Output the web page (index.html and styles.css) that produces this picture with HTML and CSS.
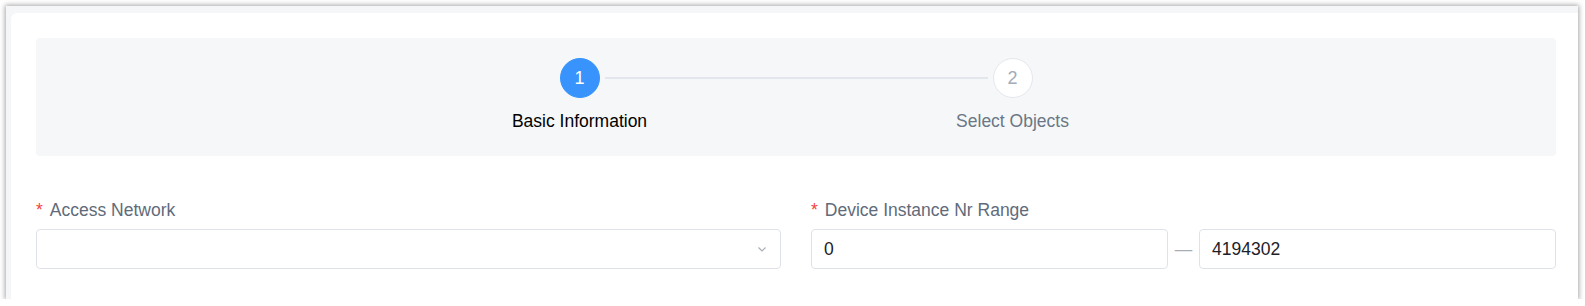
FILE: index.html
```html
<!DOCTYPE html>
<html lang="en">
<head>
  <meta charset="UTF-8">
  <meta name="viewport" content="width=device-width, initial-scale=1.0">
  <title>New Device Scan</title>
  <link rel="stylesheet" href="styles.css">
</head>
<body>
  <div class="frame">
    <div class="card">

      <!-- Steps -->
      <div class="steps">
        <div class="step active">
          <div class="step-head">
            <span class="step-icon">1</span>
            <span class="step-line"></span>
          </div>
          <div class="step-title">Basic Information</div>
        </div>
        <div class="step">
          <div class="step-head">
            <span class="step-icon">2</span>
          </div>
          <div class="step-title">Select Objects</div>
        </div>
      </div>

      <!-- Form -->
      <div class="form-row">
        <div class="form-item">
          <label class="form-label"><span class="req">*</span>Access Network</label>
          <div class="select">
            <span class="select-value"></span>
            <svg class="chevron" width="12" height="12" viewBox="0 0 12 12">
              <path d="M2.5 4.5 L6 8 L9.5 4.5" fill="none" stroke="#a8adb6" stroke-width="1.2"/>
            </svg>
          </div>
        </div>
        <div class="form-item">
          <label class="form-label"><span class="req">*</span>Device Instance Nr Range</label>
          <div class="range">
            <input class="input" type="text" value="0">
            <span class="range-sep">—</span>
            <input class="input" type="text" value="4194302">
          </div>
        </div>
      </div>

    </div>
  </div>
</body>
</html>
```

FILE: styles.css
```css
body {
  margin: 0;
  background: #fff;
  font-family: "Liberation Sans", Arial, sans-serif;
}

.frame {
  margin: 6px 0 0 6px;
  width: 1572px;
  height: 293px;
  padding: 7px 0 0 5px;
  box-sizing: border-box;
  background: #f5f6f8;
  box-shadow: 0 0 5px 1px rgba(0, 0, 0, 0.35);
  overflow: hidden;
}

.card {
  height: 100%;
  background: #fff;
  border-top-left-radius: 6px;
  padding: 25px 22px 0 25px;
  box-sizing: border-box;
}

/* Steps */
.steps {
  height: 118px;
  background: #f6f7f9;
  border-radius: 4px;
  display: flex;
  justify-content: center;
  padding-top: 20px;
  box-sizing: border-box;
}

.step {
  width: 433px;
  display: flex;
  flex-direction: column;
  align-items: flex-start;
}

.step:last-child {
  width: auto;
}

.step-head {
  display: flex;
  align-items: center;
  width: 100%;
}

.step-icon {
  width: 38px;
  height: 38px;
  border-radius: 50%;
  border: 1px solid #e4e7ed;
  background: #fff;
  color: #a3abb7;
  font-size: 18px;
  display: flex;
  align-items: center;
  justify-content: center;
  flex-shrink: 0;
}

.step.active .step-icon {
  background: #3894fc;
  border-color: #3894fc;
  color: #fff;
}

.step-line {
  flex: 1;
  height: 2px;
  background: #e3e6ec;
  margin: 0 5px;
}

.step-title {
  margin-top: 11px;
  font-size: 17.5px;
  line-height: 24px;
  color: #6b7785;
  width: 40px;
  display: flex;
  justify-content: center;
  white-space: nowrap;
}

.step.active .step-title {
  color: #000;
}

/* Form */
.form-row {
  display: flex;
  gap: 30px;
  margin-top: 42px;
}

.form-item {
  flex: 1;
}

.form-label {
  display: block;
  font-size: 17.5px;
  line-height: 24px;
  color: #5f6b7a;
  margin-bottom: 7px;
}

.req {
  color: #f53f3f;
  margin-right: 7px;
}

.select {
  height: 40px;
  border: 1px solid #dfe3e9;
  border-radius: 4px;
  box-sizing: border-box;
  display: flex;
  align-items: center;
  justify-content: flex-end;
  padding-right: 12px;
}

.range {
  display: flex;
  align-items: center;
}

.input {
  flex: 1;
  min-width: 0;
  height: 40px;
  border: 1px solid #dfe3e9;
  border-radius: 4px;
  box-sizing: border-box;
  padding: 0 12px;
  font-family: "Liberation Sans", Arial, sans-serif;
  font-size: 17.5px;
  color: #1d2129;
  outline: none;
}

.range-sep {
  width: 31px;
  text-align: center;
  color: #a8aeb8;
  font-size: 17.5px;
}
```
